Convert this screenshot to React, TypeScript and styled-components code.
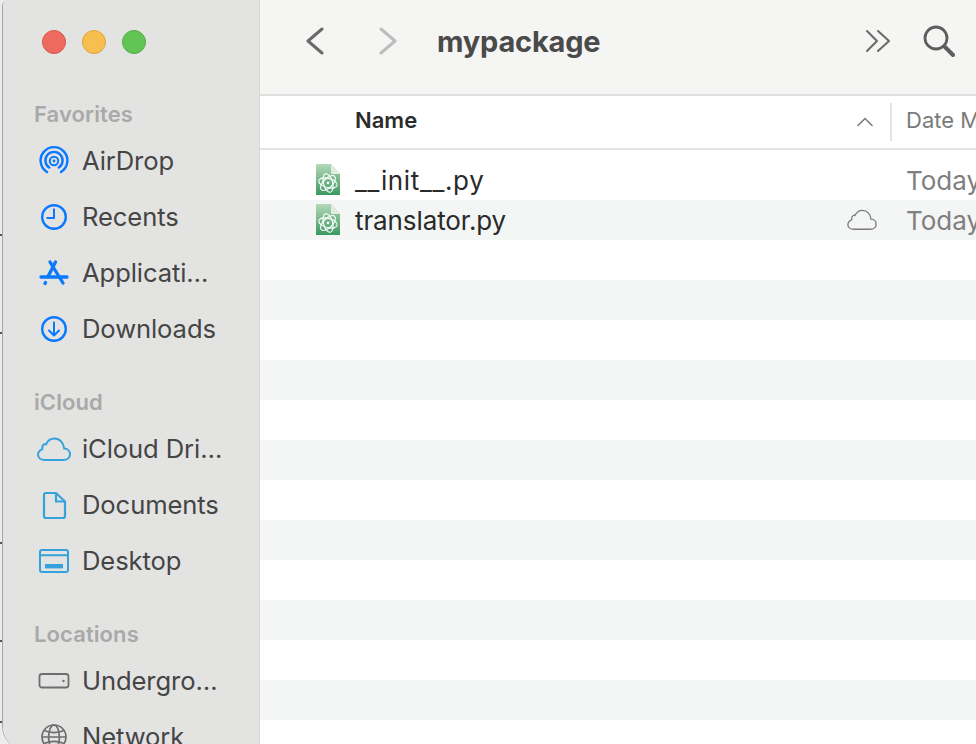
import React from "react";
import styled, { createGlobalStyle } from "styled-components";

const GlobalStyle = createGlobalStyle`
  html, body {
    margin: 0;
    padding: 0;
    background: #ececec;
  }
`;

const FONT = `Inter, "Liberation Sans", sans-serif`;

function AirDropIcon() {
  return (
    <svg width="32" height="32" viewBox="0 0 32 32" fill="none" stroke="#0a78ff" strokeWidth="2.4" strokeLinecap="round">
      <path d="M9 27 A13.4 13.4 0 1 1 23 27" />
      <path d="M11.2 22.6 A8.6 8.6 0 1 1 20.8 22.6" />
      <circle cx="16" cy="16" r="4.2" strokeWidth="2" />
      <circle cx="16" cy="16" r="1.4" fill="#0a78ff" stroke="none" />
    </svg>
  );
}

function ClockIcon() {
  return (
    <svg width="32" height="32" viewBox="0 0 32 32" fill="none" stroke="#0a78ff" strokeWidth="2.4">
      <circle cx="16" cy="16" r="11.8" />
      <path d="M16 7.5 V17 H8.5" strokeWidth="2" />
    </svg>
  );
}

function AppsIcon() {
  return (
    <svg width="32" height="32" viewBox="0 0 32 32" fill="none" stroke="#0a78ff" strokeWidth="3.3" strokeLinecap="round">
      <path d="M12 5 L25 26" />
      <path d="M17.5 5 L10 19.5" />
      <path d="M3 20 H29" />
      <path d="M7.5 25.5 L7 26.5" />
    </svg>
  );
}

function DownloadIcon() {
  return (
    <svg width="32" height="32" viewBox="0 0 32 32" fill="none" stroke="#0a78ff" strokeWidth="2.4" strokeLinecap="round" strokeLinejoin="round">
      <circle cx="16" cy="16" r="11.8" />
      <path d="M16 9.5 V22 M11 17.5 L16 22.5 L21 17.5" strokeWidth="2" />
    </svg>
  );
}

function CloudIcon({ size = 34, color = "#35a2dc", weight = 2 }: { size?: number; color?: string; weight?: number }) {
  return (
    <svg width={size} height={size * 0.72} viewBox="0 0 34 24.5" fill="none" stroke={color} strokeWidth={weight}>
      <path d="M8 23 H26.5 C30.3 23 33 20.5 33 17.2 C33 13.9 30.4 11.5 27.2 11.5 C26.6 5.8 22.8 1.5 17.6 1.5 C13.6 1.5 10.6 3.8 9 7.4 C8.3 7 7.6 6.9 7 7.4 C5.4 8.4 5 10.4 5.2 12.4 C2.7 13.4 1 15.4 1 17.8 C1 20.8 3.8 23 8 23 Z" />
    </svg>
  );
}

function DocIcon() {
  return (
    <svg width="32" height="32" viewBox="0 0 32 32" fill="none" stroke="#35a2dc" strokeWidth="2.2" strokeLinejoin="round">
      <path d="M8 4 H18 L27 12.5 V27 A2 2 0 0 1 25 29 H8 A2 2 0 0 1 6 27 V6 A2 2 0 0 1 8 4 Z" />
      <path d="M18 4 V12.5 H27" />
    </svg>
  );
}

function DesktopIcon() {
  return (
    <svg width="32" height="26" viewBox="0 0 32 26" fill="none" stroke="#35a2dc" strokeWidth="2">
      <rect x="2" y="2" width="28" height="22" rx="2" />
      <path d="M2 7.2 H30" />
      <rect x="7" y="16" width="18" height="4.4" fill="#35a2dc" stroke="none" />
    </svg>
  );
}

function DriveIcon() {
  return (
    <svg width="32" height="18" viewBox="0 0 32 18" fill="none" stroke="#6e6e6e" strokeWidth="1.8">
      <rect x="1.5" y="2" width="29" height="13.5" rx="2.5" />
      <circle cx="25.5" cy="9" r="1.2" fill="#6e6e6e" stroke="none" />
    </svg>
  );
}

function GlobeIcon() {
  return (
    <svg width="32" height="32" viewBox="0 0 32 32" fill="none" stroke="#6e6e6e" strokeWidth="1.7">
      <circle cx="16" cy="16" r="12" />
      <ellipse cx="16" cy="16" rx="5.4" ry="12" />
      <path d="M4 16 H28 M6 9.5 C12 12 20 12 26 9.5 M6 22.5 C12 20 20 20 26 22.5" />
    </svg>
  );
}

function BackIcon() {
  return (
    <svg width="20" height="28" viewBox="0 0 20 28" fill="none" stroke="#6a6a6a" strokeWidth="3" strokeLinecap="round" strokeLinejoin="round">
      <path d="M17 2 L3 14 L17 26" />
    </svg>
  );
}

function ForwardIcon() {
  return (
    <svg width="20" height="28" viewBox="0 0 20 28" fill="none" stroke="#bdbdbd" strokeWidth="3" strokeLinecap="round" strokeLinejoin="round">
      <path d="M3 2 L17 14 L3 26" />
    </svg>
  );
}

function OverflowIcon() {
  return (
    <svg width="26" height="24" viewBox="0 0 26 24" fill="none" stroke="#6a6a6a" strokeWidth="2.1" strokeLinecap="round" strokeLinejoin="round">
      <path d="M2 2 L12 12 L2 22" />
      <path d="M13 2 L24 12 L13 22" />
    </svg>
  );
}

function SearchIcon() {
  return (
    <svg width="32" height="32" viewBox="0 0 32 32" fill="none" stroke="#5e5e5e" strokeLinecap="round">
      <circle cx="13" cy="13" r="11" strokeWidth="2.8" />
      <path d="M21.5 21.5 L30 30" strokeWidth="4" />
    </svg>
  );
}

function SortIcon() {
  return (
    <svg width="16" height="10" viewBox="0 0 16 10" fill="none" stroke="#7d7d7d" strokeWidth="1.6" strokeLinecap="round" strokeLinejoin="round">
      <path d="M1 8.5 L8 1.5 L15 8.5" />
    </svg>
  );
}

function PyFileIcon({ id }: { id: string }) {
  return (
    <svg width="24" height="32" viewBox="0 0 24 32">
      <defs>
        <linearGradient id={id} x1="0" y1="0" x2="0" y2="1">
          <stop offset="0" stopColor="#b4d8b8" />
          <stop offset="1" stopColor="#3c9862" />
        </linearGradient>
      </defs>
      <path d="M0 0 H15 L24 10 V31 H0 Z" fill={`url(#${id})`} />
      <path d="M15 0 L24 10 H15 Z" fill="#e4ebe4" />
      <g fill="none" stroke="#fff" strokeWidth="1.1">
        <ellipse cx="12" cy="19" rx="9.5" ry="4.6" transform="rotate(15 12 19)" />
        <ellipse cx="12" cy="19" rx="9.5" ry="4.6" transform="rotate(75 12 19)" />
        <ellipse cx="12" cy="19" rx="9.5" ry="4.6" transform="rotate(135 12 19)" />
      </g>
      <circle cx="12" cy="19" r="1.3" fill="#fff" />
    </svg>
  );
}

const sections = [
  {
    title: "Favorites",
    items: [
      { label: "AirDrop", icon: <AirDropIcon /> },
      { label: "Recents", icon: <ClockIcon /> },
      { label: "Applicati…", icon: <AppsIcon /> },
      { label: "Downloads", icon: <DownloadIcon /> },
    ],
  },
  {
    title: "iCloud",
    items: [
      { label: "iCloud Dri…", icon: <CloudIcon /> },
      { label: "Documents", icon: <DocIcon /> },
      { label: "Desktop", icon: <DesktopIcon /> },
    ],
  },
  {
    title: "Locations",
    items: [
      { label: "Undergro…", icon: <DriveIcon /> },
      { label: "Network", icon: <GlobeIcon /> },
    ],
  },
];

// tracking: Inter's underscores are narrower than the ones in the screenshot
const files = [
  { name: "__init__.py", date: "Today", cloud: false, tracking: 0.65 },
  { name: "translator.py", date: "Today", cloud: true, tracking: -0.1 },
];

const EMPTY_ROWS = 13;

export default function App() {
  return (
    <>
      <GlobalStyle />
      <Screen>
        <Gutter />
        <Window>
          <Sidebar>
            <Lights>
              <Light $color="#ee6a5f" $edge="#d9554b" />
              <Light $color="#f6bf4f" $edge="#dfa33a" />
              <Light $color="#61c454" $edge="#4fae43" />
            </Lights>
            {sections.map((section) => (
              <Section key={section.title}>
                <SectionTitle>{section.title}</SectionTitle>
                {section.items.map((item) => (
                  <SideItem key={item.label}>
                    <SideIcon>{item.icon}</SideIcon>
                    <SideLabel>{item.label}</SideLabel>
                  </SideItem>
                ))}
              </Section>
            ))}
          </Sidebar>
          <Main>
            <Toolbar>
              <NavButton>
                <BackIcon />
              </NavButton>
              <NavButton>
                <ForwardIcon />
              </NavButton>
              <Title>mypackage</Title>
              <OverflowButton>
                <OverflowIcon />
              </OverflowButton>
              <SearchButton>
                <SearchIcon />
              </SearchButton>
            </Toolbar>
            <ColumnHeader>
              <NameColumn>Name</NameColumn>
              <SortArrow>
                <SortIcon />
              </SortArrow>
              <ColumnDivider />
              <DateColumn>Date Modified</DateColumn>
            </ColumnHeader>
            <FileList>
              {files.map((file, i) => (
                <FileRow key={file.name} $striped={i % 2 === 1}>
                  <FileIcon>
                    <PyFileIcon id={`py-${i}`} />
                  </FileIcon>
                  <FileName $tracking={file.tracking}>{file.name}</FileName>
                  <CloudCell>{file.cloud && <CloudIcon size={30} color="#7b7b7b" weight={1.5} />}</CloudCell>
                  <FileDate>{file.date}</FileDate>
                </FileRow>
              ))}
              {Array.from({ length: EMPTY_ROWS }).map((_, i) => (
                <FileRow key={i} $striped={i % 2 === 1} />
              ))}
            </FileList>
          </Main>
        </Window>
      </Screen>
    </>
  );
}

const Screen = styled.div`
  display: flex;
  width: 976px;
  height: 744px;
  overflow: hidden;
  font-family: ${FONT};
  background: #ececec;
`;

// bits of the window behind this one, only the ticks show
const Gutter = styled.div`
  flex: 0 0 2px;
  height: 744px;
  background-image: linear-gradient(#555, #555), linear-gradient(#555, #555), linear-gradient(#555, #555),
    linear-gradient(#555, #555), linear-gradient(#555, #555);
  background-size: 2px 2px;
  background-repeat: no-repeat;
  background-position: 0 234px, 0 332px, 0 542px, 0 640px, 0 721px;
`;

const Window = styled.div`
  flex: 0 0 974px;
  display: flex;
  height: 750px;
  overflow: hidden;
  border-left: 1px solid #a6a6a6;
  border-radius: 6px 0 0 24px;
  box-sizing: border-box;
  background: #fff;
`;

const Sidebar = styled.aside`
  flex: 0 0 257px;
  box-sizing: border-box;
  background: #e3e3e2;
  border-right: 1px solid #d8d8d7;
  padding-top: 30px;
`;

const Lights = styled.div`
  display: flex;
  gap: 16px;
  padding-left: 39px;
  margin-bottom: 41px;
`;

const Light = styled.span<{ $color: string; $edge: string }>`
  width: 24px;
  height: 24px;
  box-sizing: border-box;
  border-radius: 50%;
  background: ${(p) => p.$color};
  border: 1px solid ${(p) => p.$edge};
`;

const Section = styled.section`
  margin-bottom: 26px;
`;

const SectionTitle = styled.div`
  height: 38px;
  line-height: 38px;
  padding-left: 31px;
  font-size: 22px;
  font-weight: 600;
  letter-spacing: 0.1px;
  color: #a9a9a9;
`;

const SideItem = styled.div`
  display: flex;
  align-items: center;
  height: 56px;
  padding-left: 31px;
  font-size: 25.6px;
  letter-spacing: -0.1px;
  color: #454545;
  white-space: nowrap;
`;

const SideIcon = styled.span`
  display: flex;
  align-items: center;
  justify-content: center;
  flex: 0 0 40px;
  margin-right: 8px;
`;

const SideLabel = styled.span`
  padding-bottom: 2px;
`;

const Main = styled.main`
  flex: 1;
  min-width: 0;
  display: flex;
  flex-direction: column;
`;

const Toolbar = styled.header`
  display: flex;
  flex: 0 0 96px;
  align-items: center;
  box-sizing: border-box;
  padding: 0 21px 12px 45px;
  background: #f5f5f4;
  border-bottom: 2px solid #dfdfdf;
`;

const NavButton = styled.span`
  display: flex;
  flex: 0 0 20px;
  margin-right: 53px;

  & + & {
    margin-right: 39px;
  }
`;

const Title = styled.h1`
  flex: 1;
  margin: 0;
  font-size: 29px;
  font-weight: 700;
  letter-spacing: -0.2px;
  color: #4a4a4a;
`;

const OverflowButton = styled.span`
  display: flex;
  margin-right: 32px;
`;

const SearchButton = styled.span`
  display: flex;
`;

const ColumnHeader = styled.div`
  display: flex;
  flex: 0 0 54px;
  align-items: center;
  box-sizing: border-box;
  padding-left: 95px;
  border-bottom: 2px solid #e3e3e3;
  overflow: hidden;
  white-space: nowrap;
  font-size: 22px;
`;

const NameColumn = styled.div`
  flex: 0 0 502px;
  padding-bottom: 4px;
  font-weight: 600;
  color: #2c2c2c;
`;

const SortArrow = styled.span`
  display: flex;
  flex: 0 0 33px;
`;

const ColumnDivider = styled.span`
  flex: 0 0 2px;
  height: 38px;
  margin-right: 14px;
  background: #e3e3e3;
`;

const DateColumn = styled.div`
  padding-bottom: 4px;
  color: #7a7a7a;
`;

const FileList = styled.div`
  flex: 0 0 auto;
  padding-top: 10px;
`;

const FileRow = styled.div<{ $striped: boolean }>`
  display: grid;
  grid-template-columns: 95px 492px 60px 1fr;
  align-items: center;
  height: 40px;
  background: ${(p) => (p.$striped ? "#f4f5f5" : "#fff")};
  white-space: nowrap;
  overflow: hidden;
  font-size: 26px;
`;

const FileIcon = styled.span`
  display: flex;
  padding-left: 56px;
`;

const FileName = styled.span<{ $tracking: number }>`
  letter-spacing: ${(p) => p.$tracking}px;
  color: #2a2a2a;
`;

const CloudCell = styled.span`
  display: flex;
`;

const FileDate = styled.span`
  margin-left: -1px;
  color: #7f7f7f;
`;
